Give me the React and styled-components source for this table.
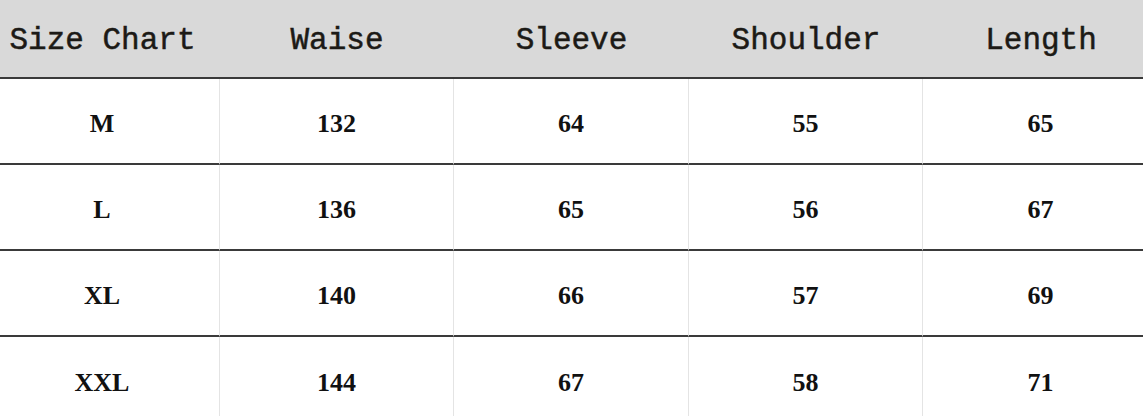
import React from 'react';
import styled, { createGlobalStyle } from 'styled-components';

const GlobalStyle = createGlobalStyle`
  html, body {
    margin: 0;
    padding: 0;
    background: #ffffff;
  }
`;

const Frame = styled.div`
  width: 1143px;
  height: 416px;
  overflow: hidden;
  background: #ffffff;
`;

const Table = styled.div`
  display: grid;
  grid-template-columns: 235px 234px 235px 234px 236px;
  width: 1174px;
  margin-left: -15px;
`;

const HeadCell = styled.div`
  height: 79px;
  display: flex;
  align-items: center;
  justify-content: center;
  background: #d9d9d9;
  border-bottom: 2px solid #3a3a3a;
  font-family: "Liberation Mono", "DejaVu Sans Mono", monospace;
  font-size: 31px;
  color: #1c1a16;
  -webkit-text-stroke: 0.5px #1c1a16;
  white-space: nowrap;
  padding-top: 3px;
  box-sizing: border-box;
`;

const Cell = styled.div`
  height: 86px;
  display: flex;
  align-items: center;
  justify-content: center;
  border-bottom: ${({ $last }) => ($last ? 'none' : '2px solid #3a3a3a')};
  border-right: 1px solid #e4e4e4;
  font-family: "Liberation Serif", "DejaVu Serif", serif;
  font-weight: bold;
  font-size: 26px;
  color: #111111;
  box-sizing: border-box;
  padding-top: 6px;
`;

const headers = ['Size Chart', 'Waise', 'Sleeve', 'Shoulder', 'Length'];

const rows = [
  ['M', '132', '64', '55', '65'],
  ['L', '136', '65', '56', '67'],
  ['XL', '140', '66', '57', '69'],
  ['XXL', '144', '67', '58', '71'],
];

const App = () => (
  <Frame>
    <GlobalStyle />
    <Table>
      {headers.map((h) => (
        <HeadCell key={h}>{h}</HeadCell>
      ))}
      {rows.map((row, i) =>
        row.map((value, j) => (
          <Cell key={`${i}-${j}`} $last={i === rows.length - 1}>
            {value}
          </Cell>
        ))
      )}
    </Table>
  </Frame>
);

export default App;
